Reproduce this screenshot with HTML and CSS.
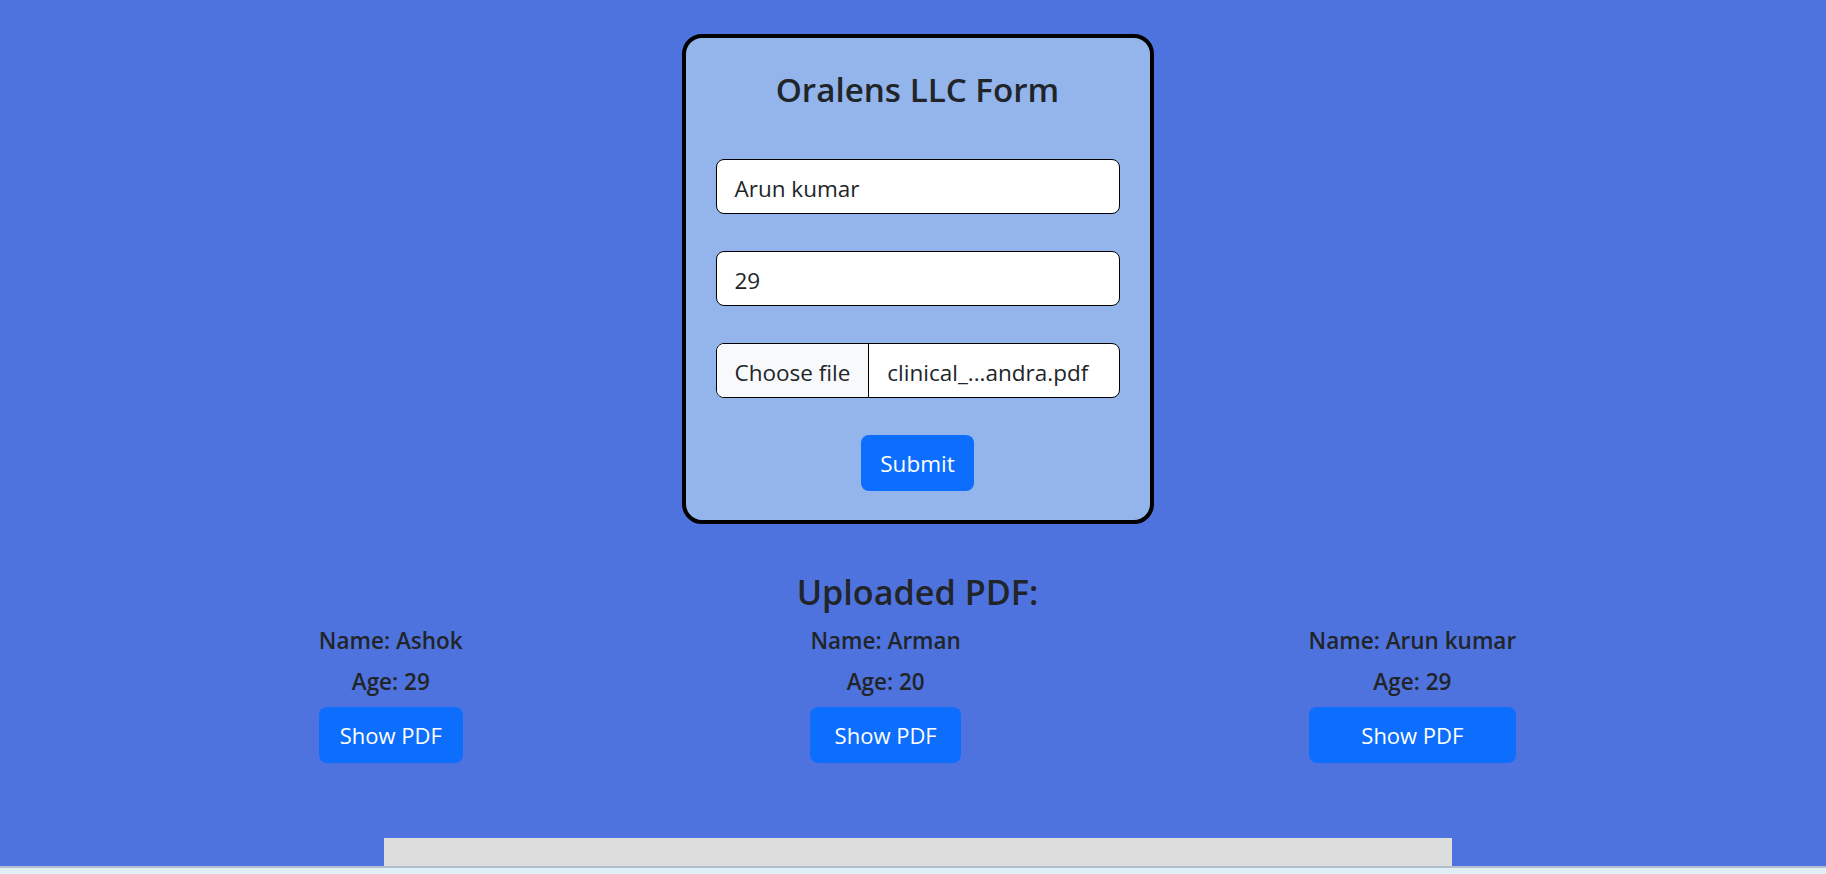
FILE: index.html
```html
<!DOCTYPE html>
<html lang="en">
<head>
<meta charset="utf-8">
<title>Oralens LLC Form</title>
<link rel="stylesheet" href="styles.css">
</head>
<body>
<div class="page">
  <div class="card">
    <h2 class="title">Oralens LLC Form</h2>
    <form class="form">
      <div class="field"><span class="field-text">Arun kumar</span></div>
      <div class="field"><span class="field-text">29</span></div>
      <div class="field file">
        <span class="file-btn">Choose file</span>
        <span class="file-name">clinical_...andra.pdf</span>
      </div>
      <div class="actions"><button type="button" class="btn submit">Submit</button></div>
    </form>
  </div>

  <h3 class="uploaded">Uploaded PDF:</h3>
  <div class="items">
    <div class="item">
      <p class="label">Name: Ashok</p>
      <p class="label">Age: 29</p>
      <button type="button" class="btn show">Show PDF</button>
    </div>
    <div class="item">
      <p class="label">Name: Arman</p>
      <p class="label">Age: 20</p>
      <button type="button" class="btn show">Show PDF</button>
    </div>
    <div class="item">
      <p class="label">Name: Arun kumar</p>
      <p class="label">Age: 29</p>
      <button type="button" class="btn show">Show PDF</button>
    </div>
  </div>

  <div class="viewer"></div>
</div>
<div class="taskbar"></div>
</body>
</html>
```

FILE: styles.css
```css
* { box-sizing: border-box; }

html, body {
  margin: 0;
  height: 874px;
  overflow: hidden;
}

body {
  background: #4f73de;
  font-family: "Open Sans", "Noto Sans", sans-serif;
  color: #212529;
}

.page {
  padding-left: 9px;
  padding-top: 34px;
}

.card {
  width: 472px;
  margin: 0 auto;
  background: #93b5ec;
  border: 4px solid #000;
  border-radius: 20px;
  padding: 32px 30px 29px;
}

.title {
  margin: 0 0 49px;
  font-size: 33.2px;
  line-height: 40px;
  font-weight: 600;
  text-align: center;
}

.form {
  display: flex;
  flex-direction: column;
  gap: 37px;
}

.field {
  height: 55px;
  background: #fff;
  border: 1px solid #000;
  border-radius: 8px;
  display: flex;
  align-items: center;
  font-size: 22.5px;
  overflow: hidden;
}

.field-text {
  padding-left: 18px;
  padding-top: 3px;
}

.file-btn {
  height: 100%;
  display: flex;
  align-items: center;
  padding: 3px 18px 0;
  background: #f8f9fa;
  border-right: 1px solid #000;
}

.file-name {
  padding-left: 18px;
  padding-top: 3px;
}

.actions {
  display: flex;
  justify-content: center;
}

.btn {
  font-family: inherit;
  background: #0d6efd;
  color: #fff;
  border: 0;
  border-radius: 8px;
  height: 56px;
  font-size: 22.5px;
  padding: 0 20.5px;
  cursor: pointer;
}

.submit {
  width: 113px;
  padding: 0;
}

.uploaded {
  margin: 48px 0 12.5px;
  font-size: 34.2px;
  line-height: 40px;
  font-weight: 600;
  text-align: center;
}

.items {
  display: flex;
  justify-content: space-around;
  margin: 0 136px;
}

.item {
  display: flex;
  flex-direction: column;
  align-items: stretch;
  text-align: center;
}

.label {
  margin: 0 0 9px;
  font-size: 22.5px;
  line-height: 32px;
  font-weight: 600;
  white-space: nowrap;
}

.label + .label {
  margin-bottom: 9px;
}

.show {
  height: 56px;
  font-size: 22px;
}

.viewer {
  width: 1068px;
  height: 400px;
  margin: 75px auto 0;
  background: #dddddd;
}

.taskbar {
  position: fixed;
  left: 0;
  right: 0;
  bottom: 0;
  height: 8px;
  background: #e0eef8;
  border-top: 2px solid #b5bdca;
}
```
